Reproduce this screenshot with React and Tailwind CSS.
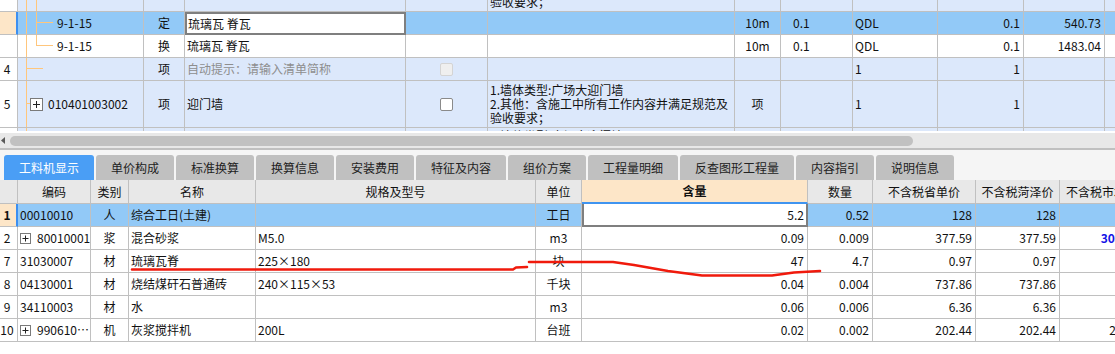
import React from 'react';

// grid column widths (each width includes the cell's right border)
const T = ['w-[18px]', 'w-[126px]', 'w-[41px]', 'w-[221px]', 'w-[82px]', 'w-[247px]', 'w-[46px]', 'w-[72px]', 'w-[85px]', 'w-[86px]', 'w-[81px]', 'w-[60px]'];
const B = ['w-[18px]', 'w-[73px]', 'w-[38px]', 'w-[127px]', 'w-[280px]', 'w-[46px]', 'w-[226px]', 'w-[65px]', 'w-[103px]', 'w-[84px]', 'w-[90px]'];

const GRID = 'border-r border-b border-[#c0c0c0]';

function Cell({ w, b = GRID, className = '', children }) {
  return (
    <div className={`${w} ${b} shrink-0 h-full flex items-center overflow-hidden whitespace-nowrap ${className}`}>
      {children}
    </div>
  );
}

function PlusBox({ big }) {
  if (big) {
    return (
      <span className="w-[13px] h-[13px] shrink-0 border border-[#7a7a7a] bg-white flex">
        <svg width="11" height="11" viewBox="0 0 11 11">
          <path d="M2 5.5h7M5.5 2v7" stroke="#222" strokeWidth="1" />
        </svg>
      </span>
    );
  }
  return (
    <span className="w-[11px] h-[11px] shrink-0 border border-[#7a7a7a] bg-white flex">
      <svg width="9" height="9" viewBox="0 0 9 9">
        <path d="M1.5 4.5h6M4.5 1.5v6" stroke="#222" strokeWidth="1" />
      </svg>
    </span>
  );
}

function Check({ disabled }) {
  return (
    <span
      className={`w-[13px] h-[13px] rounded-[2px] border ${
        disabled ? 'border-[#d4d4d4] bg-[#efefef]' : 'border-[#8a8a8a] bg-white'
      }`}
    />
  );
}

function TreeCell({ h, paths, className = '', children }) {
  return (
    <div className={`${T[1]} ${GRID} relative shrink-0 h-full flex items-center overflow-hidden whitespace-nowrap ${className}`}>
      <svg className="absolute left-0 top-0" width="126" height={h}>
        <path d={paths} stroke="#ffc67c" strokeWidth="1" fill="none" />
      </svg>
      <div className="relative flex items-center">{children}</div>
    </div>
  );
}

function Desc({ lines, top }) {
  return (
    <Cell w={T[5]} className={`px-[2px] ${top ? 'items-start pt-[1px]' : ''}`}>
      <div className="leading-[14px]">
        {lines.map((l) => (
          <div key={l}>{l}</div>
        ))}
      </div>
    </Cell>
  );
}

const descLines = ['1.墙体类型:广场大迎门墙', '2.其他：含施工中所有工作内容并满足规范及', '验收要求；'];

function TopGrid() {
  return (
    <div className="h-[131px] overflow-hidden">
      <div className="-mt-[35px] w-[1164px]">
        {/* row 3, mostly scrolled out */}
        <div className="flex h-[47px] bg-[#dce8fb]">
          <Cell w={T[0]} className="bg-white justify-center pr-[3px]">3</Cell>
          <TreeCell h={47} paths="M8.5 0V47M18.5 30V47" className="pl-[30px]">010401003001</TreeCell>
          <Cell w={T[2]} className="justify-center">项</Cell>
          <Cell w={T[3]} className="px-[3px]">大门墙</Cell>
          <Cell w={T[4]} className="justify-center"><Check /></Cell>
          <Desc lines={descLines} />
          <Cell w={T[6]} className="justify-center">项</Cell>
          <Cell w={T[7]} />
          <Cell w={T[8]} className="px-[2px]">1</Cell>
          <Cell w={T[9]} className="justify-end pr-[3px]">1</Cell>
          <Cell w={T[10]} />
          <Cell w={T[11]} />
        </div>

        {/* selected 定 row */}
        <div className="flex h-[23px] bg-[#92c9f7]">
          <Cell w={T[0]} b="border-r-2 border-b border-r-[#3d8ff0] border-b-[#c0c0c0]" className="bg-[#fde6c8]" />
          <TreeCell h={23} paths="M8.5 0V23M18.5 0V23M18 10.5H35" className="pl-[39px]">9-1-15</TreeCell>
          <Cell w={T[2]} className="justify-center">定</Cell>
          <Cell w={T[3]} b="border-2 border-[#7f7f7f]" className="bg-white px-[1px]">琉璃瓦 脊瓦</Cell>
          <Cell w={T[4]} />
          <Cell w={T[5]} />
          <Cell w={T[6]} className="justify-center">10m</Cell>
          <Cell w={T[7]} className="pl-[12px]">0.1</Cell>
          <Cell w={T[8]} className="px-[2px]">QDL</Cell>
          <Cell w={T[9]} className="justify-end pr-[3px]">0.1</Cell>
          <Cell w={T[10]} className="justify-end pr-[3px]">540.73</Cell>
          <Cell w={T[11]} />
        </div>

        {/* 换 row */}
        <div className="flex h-[23px] bg-white">
          <Cell w={T[0]} />
          <TreeCell h={23} paths="M8.5 0V23M18.5 0V10.5M18 10.5H35" className="pl-[39px]">9-1-15</TreeCell>
          <Cell w={T[2]} className="justify-center">换</Cell>
          <Cell w={T[3]} className="px-[2px]">琉璃瓦 脊瓦</Cell>
          <Cell w={T[4]} />
          <Cell w={T[5]} />
          <Cell w={T[6]} className="justify-center">10m</Cell>
          <Cell w={T[7]} className="pl-[12px]">0.1</Cell>
          <Cell w={T[8]} className="px-[2px]">QDL</Cell>
          <Cell w={T[9]} className="justify-end pr-[3px]">0.1</Cell>
          <Cell w={T[10]} className="justify-end pr-[3px]">1483.04</Cell>
          <Cell w={T[11]} />
        </div>

        {/* row 4 */}
        <div className="flex h-[23px] bg-[#dce8fb]">
          <Cell w={T[0]} className="bg-white justify-center pr-[3px]">4</Cell>
          <TreeCell h={23} paths="M8.5 0V23M8 10.5H25" />
          <Cell w={T[2]} className="justify-center">项</Cell>
          <Cell w={T[3]} className="px-[2px] text-[#8e8e8e]">自动提示：请输入清单简称</Cell>
          <Cell w={T[4]} className="justify-center"><Check disabled /></Cell>
          <Cell w={T[5]} />
          <Cell w={T[6]} />
          <Cell w={T[7]} />
          <Cell w={T[8]} className="px-[2px]">1</Cell>
          <Cell w={T[9]} className="justify-end pr-[3px]">1</Cell>
          <Cell w={T[10]} />
          <Cell w={T[11]} />
        </div>

        {/* row 5 */}
        <div className="flex h-[47px] bg-[#dce8fb]">
          <Cell w={T[0]} className="bg-white justify-center pr-[3px]">5</Cell>
          <TreeCell h={47} paths="M8.5 0V47M8 22.5H12" className="pl-[12px]">
            <PlusBox big />
            <span className="ml-[5px]">010401003002</span>
          </TreeCell>
          <Cell w={T[2]} className="justify-center">项</Cell>
          <Cell w={T[3]} className="px-[2px]">迎门墙</Cell>
          <Cell w={T[4]} className="justify-center"><Check /></Cell>
          <Desc lines={descLines} />
          <Cell w={T[6]} className="justify-center">项</Cell>
          <Cell w={T[7]} />
          <Cell w={T[8]} className="px-[2px]">1</Cell>
          <Cell w={T[9]} className="justify-end pr-[3px]">1</Cell>
          <Cell w={T[10]} />
          <Cell w={T[11]} />
        </div>

        {/* row 6, cut off */}
        <div className="flex h-[47px] bg-[#dce8fb]">
          <Cell w={T[0]} className="bg-white justify-center pr-[3px]">6</Cell>
          <TreeCell h={47} paths="M8.5 0V47M8 22.5H12" className="pl-[12px]">
            <PlusBox big />
            <span className="ml-[5px]">010401003003</span>
          </TreeCell>
          <Cell w={T[2]} className="justify-center">项</Cell>
          <Cell w={T[3]} className="px-[2px]">迎门墙</Cell>
          <Cell w={T[4]} className="justify-center"><Check /></Cell>
          <Desc lines={descLines} top />
          <Cell w={T[6]} className="justify-center">项</Cell>
          <Cell w={T[7]} />
          <Cell w={T[8]} className="px-[2px]">1</Cell>
          <Cell w={T[9]} className="justify-end pr-[3px]">1</Cell>
          <Cell w={T[10]} />
          <Cell w={T[11]} />
        </div>
      </div>
    </div>
  );
}

function ScrollBar() {
  return (
    <div className="h-[15px] bg-[#e8e8e8] flex items-center">
      <svg className="ml-[1px] shrink-0" width="5" height="7" viewBox="0 0 5 7">
        <path d="M4 0V7L0 3.5Z" fill="#5a5a5a" />
      </svg>
      <div className="ml-[4px] w-[903px] h-[10px] rounded-full bg-[#c1c1c1]" />
    </div>
  );
}

const tabs = [
  ['工料机显示', 'w-[90px]'],
  ['单价构成', 'w-[78px]'],
  ['标准换算', 'w-[78px]'],
  ['换算信息', 'w-[78px]'],
  ['安装费用', 'w-[78px]'],
  ['特征及内容', 'w-[90px]'],
  ['组价方案', 'w-[78px]'],
  ['工程量明细', 'w-[90px]'],
  ['反查图形工程量', 'w-[114px]'],
  ['内容指引', 'w-[78px]'],
  ['说明信息', 'w-[78px]'],
];

function Tabs() {
  return (
    <div className="h-[30px] bg-[#f5f5f5] pt-[5px] pl-[4px] flex gap-[2px]">
      {tabs.map(([label, w], i) => (
        <div
          key={label}
          className={`${w} h-[25px] shrink-0 rounded-t-[3px] flex items-center justify-center ${
            i === 0 ? 'bg-[#4a9ef5] text-white' : 'bg-[#c0c0c0] text-[#222]'
          }`}
        >
          {label}
        </div>
      ))}
    </div>
  );
}

const heads = ['', '编码', '类别', '名称', '规格及型号', '单位', '含量', '数量', '不含税省单价', '不含税菏泽价', '不含税市场价'];

const items = [
  { n: '1', code: '00010010', t: '人', name: '综合工日(土建)', spec: '', unit: '工日', qty: '5.2', num: '0.52', p1: '128', p2: '128', p3: '', sel: true },
  { n: '2', code: '80010001', plus: true, t: '浆', name: '混合砂浆', spec: 'M5.0', unit: 'm3', qty: '0.09', num: '0.009', p1: '377.59', p2: '377.59', p3: '305.08', hot: true },
  { n: '7', code: '31030007', t: '材', name: '琉璃瓦脊', spec: '225×180', unit: '块', qty: '47', num: '4.7', p1: '0.97', p2: '0.97', p3: '' },
  { n: '8', code: '04130001', t: '材', name: '烧结煤矸石普通砖', spec: '240×115×53', unit: '千块', qty: '0.04', num: '0.004', p1: '737.86', p2: '737.86', p3: '' },
  { n: '9', code: '34110003', t: '材', name: '水', spec: '', unit: 'm3', qty: '0.06', num: '0.006', p1: '6.36', p2: '6.36', p3: '' },
  { n: '10', code: '990610…', plus: true, t: '机', name: '灰浆搅拌机', spec: '200L', unit: '台班', qty: '0.02', num: '0.002', p1: '202.44', p2: '202.44', p3: '202.44' },
];

function BottomGrid() {
  return (
    <div className="w-[1150px]">
      <div className="flex h-[24px] bg-[#e8e8e8]">
        {heads.map((h, i) => {
          if (i === 6) {
            return (
              <Cell key={i} w={B[6]} b="border-r border-b-2 border-r-[#c0c0c0] border-b-[#3f94f0]" className="bg-[#fde6c8] justify-center font-bold">
                {h}
              </Cell>
            );
          }
          if (i === 10) {
            return (
              <Cell key={i} w={B[10]} className="pl-[6px]">
                {h}
              </Cell>
            );
          }
          return (
            <Cell key={i} w={B[i]} className="justify-center">
              {h}
            </Cell>
          );
        })}
      </div>
      {items.map((r) => (
        <div key={r.n} className={`flex h-[23px] ${r.sel ? 'bg-[#92c9f7]' : 'bg-white'}`}>
          {r.sel ? (
            <Cell w={B[0]} b="border-r-2 border-b border-r-[#3d8ff0] border-b-[#c0c0c0]" className="bg-[#fde6c8] justify-center pr-[2px] font-bold">
              {r.n}
            </Cell>
          ) : (
            <Cell w={B[0]} className="justify-center pr-[3px]">{r.n}</Cell>
          )}
          <Cell w={B[1]} className="pl-[2px]">
            {r.plus && <PlusBox />}
            <span className={r.plus ? 'ml-[6px]' : ''}>{r.code}</span>
          </Cell>
          <Cell w={B[2]} className="justify-center">{r.t}</Cell>
          <Cell w={B[3]} className="pl-[2px]">{r.name}</Cell>
          <Cell w={B[4]} className="pl-[2px]">{r.spec}</Cell>
          <Cell w={B[5]} className="justify-center">{r.unit}</Cell>
          {r.sel ? (
            <Cell w={B[6]} b="border-2 border-t-0 border-[#7f7f7f]" className="bg-white justify-end pr-[2px]">{r.qty}</Cell>
          ) : (
            <Cell w={B[6]} className="justify-end pr-[3px]">{r.qty}</Cell>
          )}
          <Cell w={B[7]} className="justify-end pr-[3px]">{r.num}</Cell>
          <Cell w={B[8]} className="justify-end pr-[3px]">{r.p1}</Cell>
          <Cell w={B[9]} className="justify-end pr-[3px]">{r.p2}</Cell>
          <Cell w={B[10]} className={r.hot ? 'justify-end pr-[9px] text-[#1414e6] font-bold' : 'justify-end pr-[3px]'}>{r.p3}</Cell>
        </div>
      ))}
    </div>
  );
}

function RedMark() {
  return (
    <svg className="absolute left-0 top-0 pointer-events-none" width="1115" height="354">
      <polyline
        points="132,269.5 513,269.5 516,267.5 527,267"
        fill="none"
        stroke="#f01a0c"
        strokeWidth="2.6"
        strokeLinecap="round"
        strokeLinejoin="round"
      />
      <polyline
        points="529,262 613,262 634,265 668,271 702,275.5 772,275.5 794,272.5 820,271"
        fill="none"
        stroke="#f01a0c"
        strokeWidth="2.6"
        strokeLinecap="round"
        strokeLinejoin="round"
      />
    </svg>
  );
}

export default function App() {
  return (
    <div className="relative w-[1115px] h-[354px] overflow-hidden bg-white text-[12px] leading-[16px] text-[#111] font-['Noto_Sans_CJK_SC','Noto_Sans',sans-serif]">
      <TopGrid />
      <div className="h-[2px] bg-white" />
      <ScrollBar />
      <div className="h-[2px] bg-[#c0c0c0]" />
      <Tabs />
      <BottomGrid />
      <RedMark />
    </div>
  );
}
